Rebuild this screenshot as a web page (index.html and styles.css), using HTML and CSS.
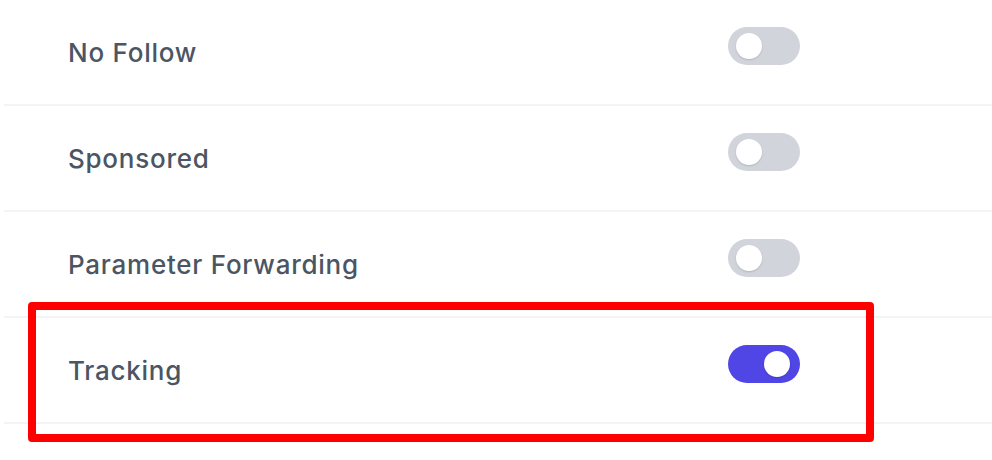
FILE: index.html
```html
<!DOCTYPE html>
<html lang="en">
<head>
<meta charset="utf-8">
<title>Link options</title>
<link rel="stylesheet" href="styles.css">
</head>
<body>
<div class="list">
  <div class="row">
    <span class="label">No Follow</span>
    <span class="toggle"><span class="knob"></span></span>
  </div>
  <div class="row">
    <span class="label">Sponsored</span>
    <span class="toggle"><span class="knob"></span></span>
  </div>
  <div class="row">
    <span class="label">Parameter Forwarding</span>
    <span class="toggle"><span class="knob"></span></span>
  </div>
  <div class="row">
    <span class="label">Tracking</span>
    <span class="toggle on"><span class="knob"></span></span>
  </div>
  <div class="highlight"></div>
</div>
</body>
</html>
```

FILE: styles.css
```css
html, body {
  margin: 0;
  padding: 0;
  background: #ffffff;
}

body {
  font-family: Inter, "Noto Sans", "Liberation Sans", sans-serif;
  width: 992px;
  height: 460px;
  overflow: hidden;
}

.list {
  position: relative;
  margin-left: 4px;
}

.row {
  display: flex;
  align-items: center;
  height: 104px;
  border-bottom: 2px solid #f3f4f6;
  padding-left: 64px;
  box-sizing: content-box;
}

.label {
  width: 660px;
  font-size: 26px;
  font-weight: 500;
  color: #4b5563;
  letter-spacing: 0.75px;
}

.toggle {
  position: relative;
  width: 72px;
  height: 38px;
  border-radius: 19px;
  background: #d1d5db;
  margin-bottom: 12px;
}

.toggle.on {
  background: #4f46e5;
}

.knob {
  position: absolute;
  top: 6px;
  left: 8px;
  width: 26px;
  height: 26px;
  border-radius: 50%;
  background: #ffffff;
  box-shadow: 0 1px 2px rgba(0, 0, 0, 0.15);
}

.toggle.on .knob {
  left: 36px;
}

.highlight {
  position: absolute;
  left: 24px;
  top: 302px;
  width: 830px;
  height: 124px;
  border: 8px solid #ff0000;
  border-radius: 4px;
}
```
